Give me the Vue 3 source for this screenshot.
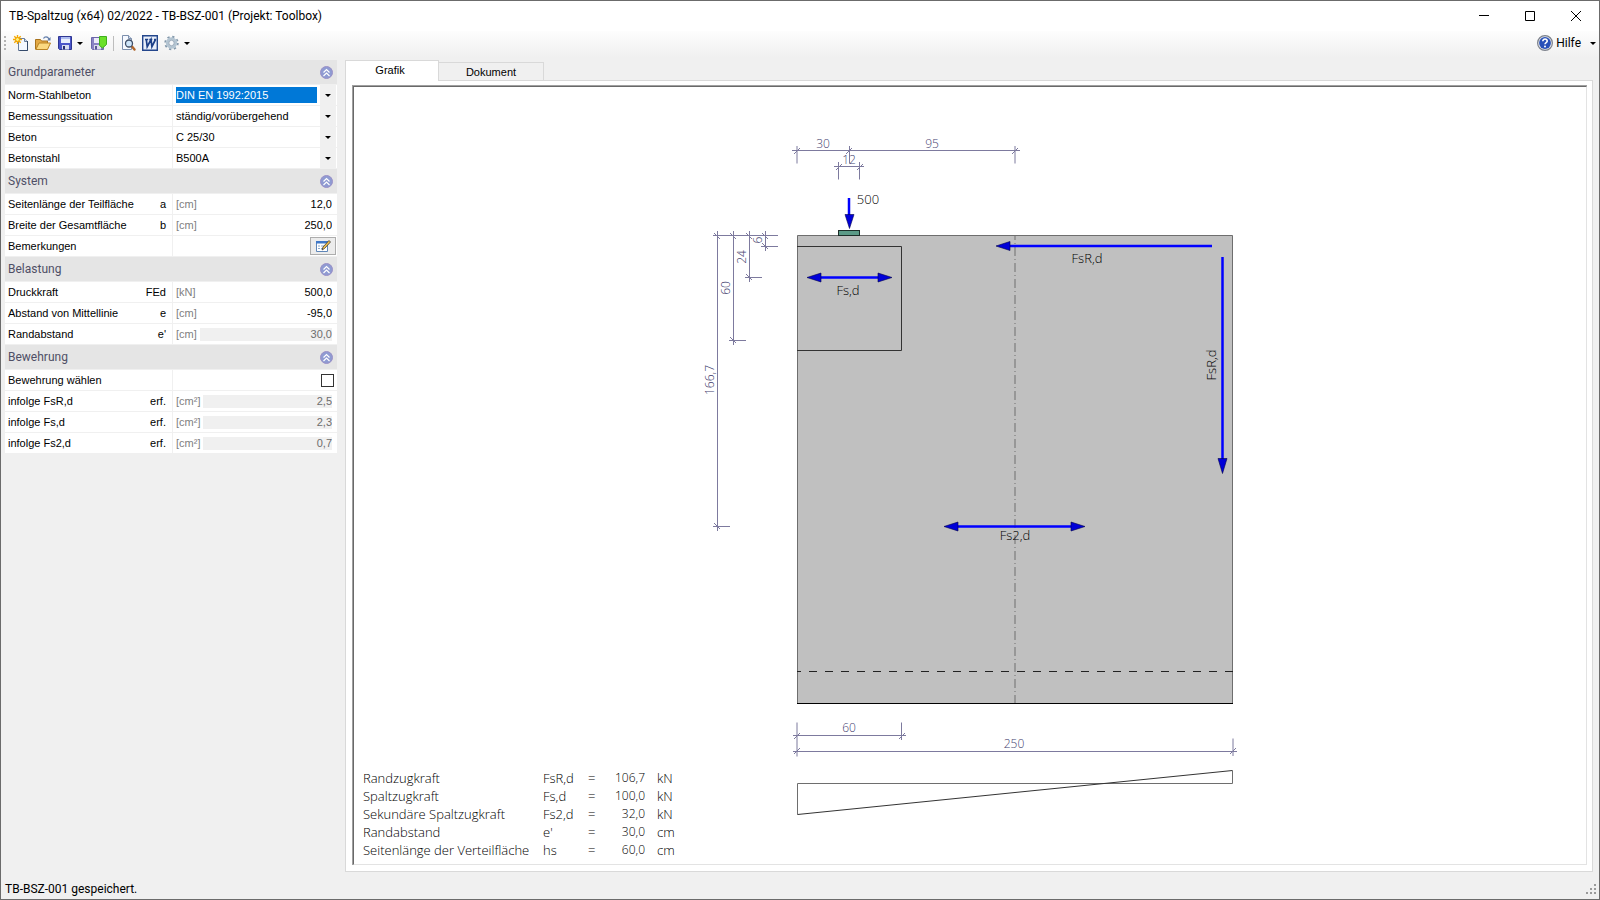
<script setup>
import { ref, reactive } from 'vue'

const activeTab = ref('Grafik')

const sections = reactive([
  {
    title: 'Grundparameter',
    open: true,
    rows: [
      { id: 'norm', label: 'Norm-Stahlbeton', kind: 'select', value: 'DIN EN 1992:2015', active: true },
      { id: 'situation', label: 'Bemessungssituation', kind: 'select', value: 'ständig/vorübergehend' },
      { id: 'beton', label: 'Beton', kind: 'select', value: 'C 25/30' },
      { id: 'stahl', label: 'Betonstahl', kind: 'select', value: 'B500A' },
    ],
  },
  {
    title: 'System',
    open: true,
    rows: [
      { id: 'a', label: 'Seitenlänge der Teilfläche', symbol: 'a', unit: '[cm]', kind: 'number', value: '12,0' },
      { id: 'b', label: 'Breite der Gesamtfläche', symbol: 'b', unit: '[cm]', kind: 'number', value: '250,0' },
      { id: 'notes', label: 'Bemerkungen', kind: 'button' },
    ],
  },
  {
    title: 'Belastung',
    open: true,
    rows: [
      { id: 'fed', label: 'Druckkraft', symbol: 'FEd', unit: '[kN]', kind: 'number', value: '500,0' },
      { id: 'e', label: 'Abstand von Mittellinie', symbol: 'e', unit: '[cm]', kind: 'number', value: '-95,0' },
      { id: 'e1', label: 'Randabstand', symbol: "e'", unit: '[cm]', kind: 'number', value: '30,0', locked: true },
    ],
  },
  {
    title: 'Bewehrung',
    open: true,
    rows: [
      { id: 'choose', label: 'Bewehrung wählen', kind: 'check', value: false },
      { id: 'asr', label: 'infolge FsR,d', symbol: 'erf.', unit: '[cm²]', kind: 'number', value: '2,5', locked: true },
      { id: 'as', label: 'infolge Fs,d', symbol: 'erf.', unit: '[cm²]', kind: 'number', value: '2,3', locked: true },
      { id: 'as2', label: 'infolge Fs2,d', symbol: 'erf.', unit: '[cm²]', kind: 'number', value: '0,7', locked: true },
    ],
  },
])

const results = [
  ['Randzugkraft', 'FsR,d', '106,7', 'kN'],
  ['Spaltzugkraft', 'Fs,d', '100,0', 'kN'],
  ['Sekundäre Spaltzugkraft', 'Fs2,d', '32,0', 'kN'],
  ['Randabstand', "e'", '30,0', 'cm'],
  ['Seitenlänge der Verteilfläche', 'hs', '60,0', 'cm'],
]

const hTicks = [
  [797, 151], [849, 151], [1015, 151], [839, 167], [860, 167],
  [797, 736], [902, 736], [797, 751], [1233, 751],
]
const vTicks = [
  [717, 236], [733, 236], [749, 236], [765, 236],
  [717, 526], [733, 340], [749, 277], [765, 246],
]
</script>

<template>
  <div class="window">
    <header class="titlebar">
      <h1>TB-Spaltzug (x64) 02/2022 - TB-BSZ-001 (Projekt: Toolbox)</h1>
      <div class="controls">
        <button aria-label="Minimieren"><svg viewBox="0 0 12 12"><path d="M1 5.5h10" /></svg></button>
        <button aria-label="Maximieren"><svg viewBox="0 0 12 12"><path d="M1.5 1.5h9v9h-9z" /></svg></button>
        <button aria-label="Schließen"><svg viewBox="0 0 12 12"><path d="M1 1l10 10M11 1L1 11" /></svg></button>
      </div>
    </header>

    <nav class="toolbar">
      <span class="grip"></span>
      <button aria-label="Neu">
        <svg viewBox="0 0 16 16">
          <path d="M5.5 3.5h6l3 3v9h-9z" fill="#f4f8ff" stroke="#6b7f9c" />
          <path d="M11.5 3.5v3h3" fill="#c8d6ea" stroke="#6b7f9c" />
          <path d="M14.5 6v9.5h-8" fill="none" stroke="#34496a" />
          <path d="M4.500 0v9M0 4.500h9M1.300 1.300l6.400 6.400M7.700 1.300L1.300 7.700" stroke="#f5a800" stroke-width="1.400" />
          <circle cx="4.500" cy="4.500" r="2" fill="#fff27a" stroke="#f0a000" />
        </svg>
      </button>
      <button aria-label="Öffnen">
        <svg viewBox="0 0 16 16">
          <path d="M.5 14V4.500h5l1 1.500h6V14z" fill="#e3a945" stroke="#a8731d" />
          <path d="M.8 14.500L4 8h11.500l-3 6.500z" fill="#fbd980" stroke="#b98324" />
          <path d="M8.500 3.500c1-2 4-2.500 5.500.5" fill="none" stroke="#5f7ba8" stroke-width="1.200" />
          <path d="M15.500 2v3.500H12z" fill="#5f7ba8" />
        </svg>
      </button>
      <button aria-label="Speichern">
        <svg viewBox="0 0 16 16">
          <path d="M1.500 1.500h13v13h-12l-1-1z" fill="#4a55c8" stroke="#2f3792" />
          <path d="M4 2h9v6H4z" fill="#e8eefc" />
          <path d="M4 2h9v2H4z" fill="#aebcf0" />
          <path d="M5 10h7v4.500H5z" fill="#d7dcf0" />
          <path d="M6 11h2v3.500H6z" fill="#262d6e" />
        </svg>
      </button>
      <button class="drop" aria-label="Speicheroptionen"><i class="caret"></i></button>
      <button aria-label="Speichern und schließen">
        <svg viewBox="0 0 16 16">
          <path d="M.5 2.500h12v12h-11l-1-1z" fill="#8a83c4" stroke="#6b66aa" />
          <path d="M3 3h6v5H3z" fill="#eceafa" />
          <path d="M3 10h7v4.500H3z" fill="#dcdcec" />
          <path d="M4 11h2v3.500H4z" fill="#5a5596" />
          <path d="M8.500 1.500h7v8l-4 3.500-3-2.500z" fill="#6be02a" stroke="#3fae1e" />
        </svg>
      </button>
      <span class="divider"></span>
      <button aria-label="Seitenansicht">
        <svg viewBox="0 0 16 16">
          <path d="M2.500.5h6l3 3v11h-9z" fill="#f6f9ff" stroke="#7c8fad" />
          <path d="M8.500.5v3h3" fill="#cdd9ea" stroke="#7c8fad" />
          <path d="M12 11.500l2.500 3" stroke="#b0662c" stroke-width="2.400" stroke-linecap="round" />
          <circle cx="9" cy="8.500" r="3.500" fill="#cfe6fa" stroke="#3e4d66" stroke-width="1.300" />
        </svg>
      </button>
      <button aria-label="Word">
        <svg viewBox="0 0 16 16">
          <path d="M.7.7h14.600v14.600H.7z" fill="#e9effa" stroke="#23468c" stroke-width="1.400" />
          <path d="M3 4.500h3.200M7.300 4.500h3M12 4.500h2.200M4.300 4.500l.9 7.200L9 4.500l.9 7.200 3.600-7.200" fill="none" stroke="#1d4088" stroke-width="1.700" />
        </svg>
      </button>
      <button aria-label="Einstellungen">
        <svg viewBox="0 0 16 16">
          <circle cx="7.500" cy="8" r="6.300" fill="none" stroke="#8398ab" stroke-width="1.800" stroke-dasharray="2.200 2.748" />
          <circle cx="7.500" cy="8" r="4.200" fill="none" stroke="#b4c5d2" stroke-width="3" />
          <circle cx="7.500" cy="8" r="2.700" fill="#f6f8fa" stroke="#8b9dae" stroke-width=".8" />
        </svg>
      </button>
      <button class="drop" aria-label="Weitere Einstellungen"><i class="caret"></i></button>
      <button class="help">
        <svg viewBox="0 0 16 16">
          <circle cx="8" cy="8" r="7.400" fill="#e4e7ec" stroke="#7d828c" stroke-width="1.200" />
          <circle cx="8" cy="8" r="5.900" fill="#2850b8" />
          <path d="M5.800 6.200c0-3 4.600-2.800 4.400-.1-.1 1.500-2.200 1.500-2.200 3.200" fill="none" stroke="#fff" stroke-width="1.600" />
          <circle cx="8" cy="11.600" r="1" fill="#fff" />
        </svg>
        <span>Hilfe</span>
        <i class="caret"></i>
      </button>
    </nav>

    <main class="body">
      <aside class="params">
        <section v-for="s in sections" :key="s.title">
          <h2>
            {{ s.title }}
            <button :aria-label="s.title + ' einklappen'" :aria-expanded="s.open" @click="s.open = !s.open">
              <svg viewBox="0 0 13 13">
                <circle cx="6.500" cy="6.500" r="6" fill="#8f9bd2" stroke="#9a8fc6" />
                <path d="M3.500 6.500l3-3 3 3M3.500 10l3-3 3 3" fill="none" stroke="#fff" stroke-width="1.200" />
              </svg>
            </button>
          </h2>
          <template v-if="s.open">
            <div v-for="r in s.rows" :key="r.id" class="row">
              <label :for="r.id">{{ r.label }}<span>{{ r.symbol }}</span></label>
              <div v-if="r.kind === 'select'" class="field combo">
                <select :id="r.id" :class="{ active: r.active }"><option>{{ r.value }}</option></select>
                <span class="arrow"><i class="caret"></i></span>
              </div>
              <div v-else-if="r.kind === 'number'" class="field">
                <span class="unit">{{ r.unit }}</span>
                <input :id="r.id" v-model="r.value" type="text" :disabled="r.locked" />
              </div>
              <div v-else-if="r.kind === 'button'" class="field end">
                <button :id="r.id" class="edit">
                  <svg viewBox="0 0 16 14">
                    <path d="M1.500 2.500h11v10h-11z" fill="#fff" stroke="#5f86b8" />
                    <path d="M1 2h12v2.500H1z" fill="#3f78c8" />
                    <path d="M3 7h2M3 9.500h2M6 7h4M6 9.500h3" stroke="#8aa7cc" />
                    <path d="M7 11l1-3 6-6.500 1.500 1.500-6 6.500z" fill="#f3c04a" stroke="#3b3b3b" stroke-width=".8" />
                  </svg>
                </button>
              </div>
              <div v-else class="field end">
                <input :id="r.id" v-model="r.value" type="checkbox" />
              </div>
            </div>
          </template>
        </section>
      </aside>

      <div class="work">
        <div class="tabs" role="tablist">
          <button
            v-for="t in ['Grafik', 'Dokument']"
            :key="t"
            role="tab"
            :aria-selected="activeTab === t"
            :class="{ on: activeTab === t }"
            @click="activeTab = t"
          >{{ t }}</button>
        </div>
        <div class="panel">
          <div class="sunken">
            <div class="canvas">
              <svg class="drawing" viewBox="354 87 1232 777">
                <rect x="797" y="235.500" width="436" height="468" fill="#c0c0c0" />
                <path d="M797.500 703V235.500h435V703" class="edge" />
                <path d="M797 703.500h436" stroke="#000" />
                <path d="M797 246.500h104.500v104H797" fill="none" stroke="#333" />
                <path d="M1015 236v467" class="axis" />
                <path d="M797 671.500h436" class="hidden" />
                <rect x="838.500" y="230.500" width="21" height="5" fill="#5b9a87" stroke="#1c2c28" />

                <g class="dim">
                  <path d="M792 150.500h228M797 146v17.500M849.500 146v17.500M1015 146v17.500" />
                  <path d="M834 166.500h30M838.500 162v17.500M859.500 162v17.500" />
                  <path d="M713 235.500h65M717.500 231v300M733.500 231v114M749.500 231v51M765.500 231v20" />
                  <path d="M713 526.500h17M729 340.500h17M745 277.500h17M761 246.500h17" />
                  <path d="M793 735.500h113M797 722.500v34M901.500 722.500v17.500" />
                  <path d="M793 751.500h444M1233 738.500v17.500" />
                  <path v-for="(p, i) in hTicks" :key="'h' + i" :d="`M${p[0] - 3} ${p[1] + 3}l6 -6`" />
                  <path v-for="(p, i) in vTicks" :key="'v' + i" :d="`M${p[0] - 3} ${p[1] - 3}l6 6`" />
                </g>
                <g class="dimtext">
                  <text x="823" y="148">30</text>
                  <text x="932" y="148">95</text>
                  <text x="849" y="164">12</text>
                  <text x="849" y="732">60</text>
                  <text x="1014" y="748">250</text>
                  <text transform="translate(762 240) rotate(-90)">6</text>
                  <text transform="translate(746 257) rotate(-90)">24</text>
                  <text transform="translate(730 288) rotate(-90)">60</text>
                  <text transform="translate(714 380) rotate(-90)">166,7</text>
                </g>

                <g class="force">
                  <path d="M849 198v17" />
                  <path d="M820 277.500h59" />
                  <path d="M1009 246h203" />
                  <path d="M1222.500 257v202" />
                  <path d="M958 526.500h114" />
                </g>
                <g class="head">
                  <path d="M845 214.500h9l-4.500 14z" />
                  <path d="M807 277.500l14-4.500v9zM892 277.500l-14-4.500v9z" />
                  <path d="M996 246l14-4.500v9z" />
                  <path d="M1218 458.500h9l-4.500 15z" />
                  <path d="M944 526.500l14-4.500v9zM1085 526.500l-14-4.500v9z" />
                </g>
                <g class="label">
                  <text x="868" y="204">500</text>
                  <text x="848" y="295">Fs,d</text>
                  <text x="1087" y="263">FsR,d</text>
                  <text x="1015" y="540">Fs2,d</text>
                  <text transform="translate(1216 365) rotate(-90)">FsR,d</text>
                </g>

                <path d="M1232.500 783.500h-435v31" class="edge" />
                <path d="M797.500 814.500l435-44" fill="none" stroke="#333" />
                <path d="M1232.500 770.500v13" class="edge" />
              </svg>
              <table class="results">
                <tbody>
                  <tr v-for="r in results" :key="r[0]">
                    <th scope="row">{{ r[0] }}</th>
                    <td class="sym">{{ r[1] }}</td>
                    <td class="eq">=</td>
                    <td class="val">{{ r[2] }}</td>
                    <td class="dimn">{{ r[3] }}</td>
                  </tr>
                </tbody>
              </table>
            </div>
          </div>
        </div>
      </div>
    </main>

    <footer class="status">
      <span>TB-BSZ-001 gespeichert.</span>
      <svg class="sizer" viewBox="0 0 10 10">
        <path d="M8 0h2v2H8zM4 4h2v2H4zM8 4h2v2H8zM0 8h2v2H0zM4 8h2v2H4zM8 8h2v2H8z" fill="#9a9a9a" />
      </svg>
    </footer>
  </div>
</template>

<style>
body {
  margin: 0;
}
</style>

<style scoped>
.window {
  display: flex;
  flex-direction: column;
  box-sizing: border-box;
  height: 100vh;
  border: 1px solid #6b6b6b;
  background: #f0f0f0;
  color: #000;
  font: 12px/16px Roboto, "Liberation Sans", sans-serif;
}
.window * {
  box-sizing: border-box;
}
button {
  margin: 0;
  padding: 0;
  border: 0;
  background: none;
  color: inherit;
  font: inherit;
}
svg {
  display: block;
}
h1,
h2 {
  margin: 0;
  font: inherit;
}
.titlebar {
  display: flex;
  align-items: center;
  justify-content: space-between;
  flex: none;
  height: 30px;
  padding-left: 8px;
  background: #fff;
}
.controls {
  display: flex;
}
.controls button {
  display: grid;
  place-items: center;
  width: 46px;
  height: 28px;
}
.controls svg {
  width: 12px;
  height: 12px;
  fill: none;
  stroke: #000;
}
.toolbar {
  display: flex;
  align-items: center;
  flex: none;
  height: 26px;
  padding: 0 3px 2px;
  background: linear-gradient(#fdfdfd, #f0f0f0);
}
.toolbar svg {
  width: 16px;
  height: 16px;
}
.toolbar > button {
  margin-right: 6px;
}
.toolbar > .drop {
  display: grid;
  place-items: center;
  width: 6px;
  height: 20px;
  margin: 0 8px 0 -2px;
}
.grip {
  width: 2px;
  height: 14px;
  margin-right: 7px;
  background: repeating-linear-gradient(#b4b4b4 0 2px, transparent 2px 4px);
}
.divider {
  width: 1px;
  height: 15px;
  margin-right: 6px;
  background: #bdbdbd;
}
.caret {
  display: block;
  width: 0;
  height: 0;
  border: 3px solid transparent;
  border-top-color: #000;
  border-bottom: 0;
}
.toolbar > .help {
  display: flex;
  align-items: center;
  margin: 0 0 0 auto;
}
.help span {
  margin: 0 9px 0 3px;
}
.body {
  display: flex;
  flex: 1;
  min-height: 0;
}
.params {
  flex: none;
  width: 332px;
  margin: 3px 8px 0 4px;
  font-family: "Liberation Sans", sans-serif;
  font-size: 11px;
}
.params h2 {
  display: flex;
  align-items: center;
  justify-content: space-between;
  height: 25px;
  padding: 0 4px 0 3px;
  border-bottom: 1px solid #f0f0f0;
  background: #e5e5e5;
  color: #4f4f66;
  font-family: Roboto, "Liberation Sans", sans-serif;
  font-size: 12px;
}
.params h2 svg {
  width: 13px;
  height: 13px;
}
.row {
  display: grid;
  grid-template-columns: 168px minmax(0, 1fr);
  height: 21px;
  border-bottom: 1px solid #f0f0f0;
  background: #fff;
}
.row label {
  display: flex;
  align-items: center;
  justify-content: space-between;
  padding: 0 6px 0 3px;
  border-right: 1px solid #f0f0f0;
}
.field {
  display: flex;
  align-items: center;
  gap: 3px;
  padding: 0 5px 0 3px;
}
.field.combo {
  padding-right: 1px;
}
.field.end {
  justify-content: flex-end;
  padding-right: 1px;
}
.unit {
  color: #808080;
}
.field select {
  appearance: none;
  flex: 1;
  min-width: 0;
  height: 16px;
  padding: 0;
  border: 0;
  border-radius: 0;
  background: transparent;
  color: inherit;
  font: inherit;
  outline: none;
}
.field select.active {
  background: #0078d7;
  color: #fff;
}
.arrow {
  display: grid;
  place-items: center;
  align-self: stretch;
  width: 16px;
  background: #f0f0f0;
}
.field input[type="text"] {
  flex: 1;
  min-width: 0;
  height: 13px;
  padding: 0;
  border: 0;
  background: #fff;
  color: inherit;
  font: inherit;
  text-align: right;
  outline: none;
}
.field input:disabled {
  background: #f0f0f0;
  color: #6d6d6d;
}
.field input[type="checkbox"] {
  appearance: none;
  width: 13px;
  height: 13px;
  margin: 0 2px 0 0;
  border: 1px solid #333;
  background: #fff;
}
.field input[type="checkbox"]:checked {
  background: #333;
}
.edit {
  display: grid;
  place-items: center;
  width: 26px;
  height: 18px;
  border: 1px solid #adadad;
  background: #ececec;
}
.edit svg {
  width: 16px;
  height: 14px;
}
.work {
  display: flex;
  flex: 1;
  flex-direction: column;
  min-width: 0;
  padding: 3px 6px 0 0;
}
.tabs {
  display: flex;
  align-items: flex-end;
  flex: none;
  height: 20px;
  font-family: "Liberation Sans", sans-serif;
  font-size: 11px;
}
.tabs button {
  width: 105px;
  height: 18px;
  border: 1px solid #d9d9d9;
  border-left: 0;
  border-bottom: 0;
  background: #f0f0f0;
}
.tabs button.on {
  position: relative;
  width: 94px;
  height: 21px;
  margin-bottom: -1px;
  padding: 0 4px 2px 0;
  border-left: 1px solid #d9d9d9;
  background: #fff;
}
.panel {
  display: flex;
  flex: 1;
  min-height: 0;
  padding: 4px 5px 6px 6px;
  border: 1px solid #d9d9d9;
  background: #fff;
}
.sunken {
  display: flex;
  flex: 1;
  min-width: 0;
  border: solid #a0a0a0;
  border-width: 1px 0 0 1px;
}
.canvas {
  display: grid;
  flex: 1;
  grid-template: minmax(0, 1fr) / minmax(0, 1fr);
  min-width: 0;
  border: 1px solid;
  border-color: #696969 #e3e3e3 #e3e3e3 #696969;
  font-family: "Open Sans", "Noto Sans", sans-serif;
}
.drawing {
  grid-area: 1 / 1;
  width: 100%;
  height: 100%;
}
.edge {
  fill: none;
  stroke: #6e6e6e;
}
.axis {
  stroke: #6e6e6e;
  stroke-dasharray: 9 3 1 3;
  stroke-dashoffset: 5;
}
.hidden {
  stroke: #222;
  stroke-dasharray: 8 8;
  stroke-dashoffset: 4;
}
.dim {
  fill: none;
  stroke: #7d7a9e;
}
.drawing text {
  font-size: 12px;
  font-weight: 300;
  text-anchor: middle;
}
.drawing .label text {
  font-size: 13px;
}
.dimtext {
  fill: #45426f;
}
.force {
  stroke: #00f;
  stroke-width: 2.5;
}
.head {
  fill: #0000d8;
  stroke: #00004a;
  stroke-width: .6;
}
.results {
  grid-area: 1 / 1;
  align-self: end;
  justify-self: start;
  margin: 0 0 5px 9px;
  border-collapse: collapse;
  font-size: 13px;
  font-weight: 300;
  line-height: 18px;
}
.results th,
.results td {
  padding: 0;
  font-weight: inherit;
  text-align: left;
}
.results th {
  width: 180px;
}
.results .sym {
  width: 45px;
}
.results .eq {
  width: 12px;
}
.results .val {
  width: 45px;
  font-size: 12px;
  text-align: right;
}
.results .dimn {
  padding-left: 12px;
}
.status {
  display: flex;
  align-items: center;
  justify-content: space-between;
  flex: none;
  height: 27px;
  padding: 6px 3px 0 4px;
}
.sizer {
  width: 10px;
  height: 10px;
}
</style>
